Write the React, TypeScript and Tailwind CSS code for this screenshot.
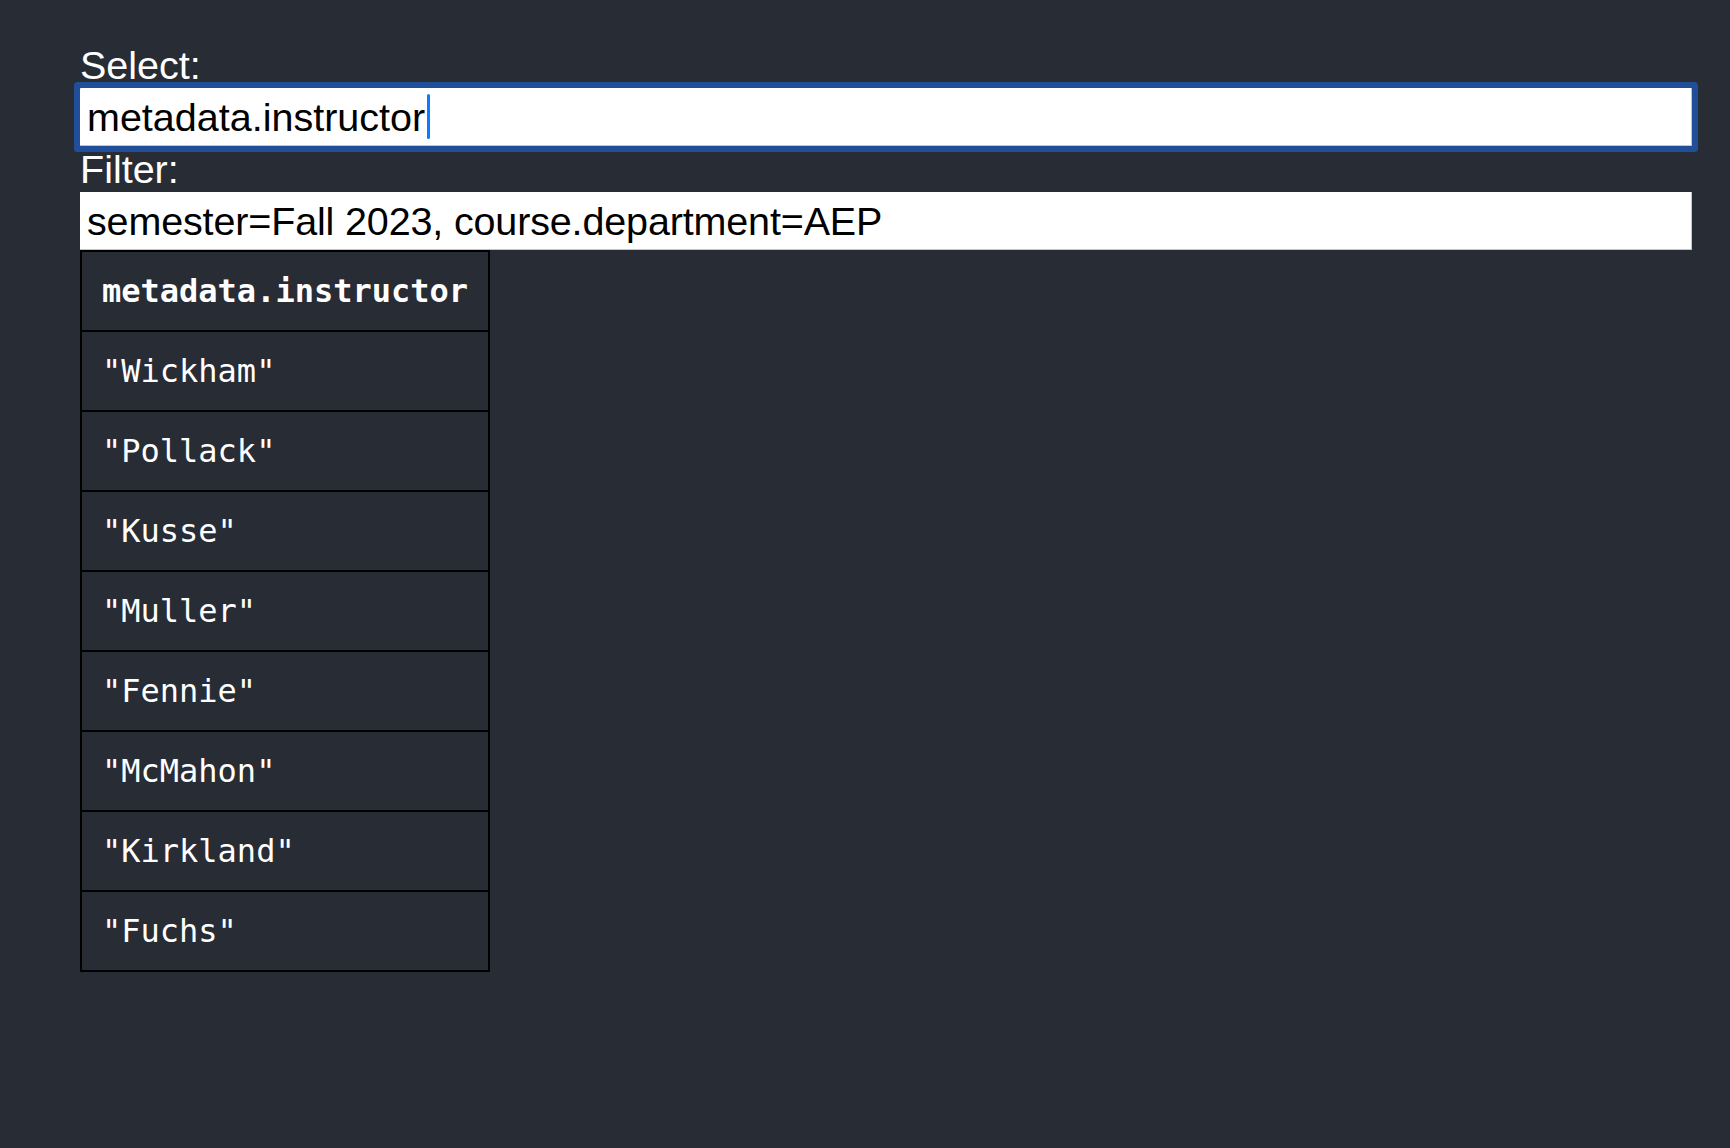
import React from "react";

const names = [
  "Wickham",
  "Pollack",
  "Kusse",
  "Muller",
  "Fennie",
  "McMahon",
  "Kirkland",
  "Fuchs",
];

export default function App() {
  return (
    <div className="min-h-[1148px] w-full bg-[#282c34] pl-[80px] pr-[38px] pt-[42px] font-['Liberation_Sans',Arial,sans-serif]">
      <label className="block h-[46px] text-[39.5px] leading-[46px] text-white">Select:</label>
      <div className="flex h-[58px] items-center rounded-[1px] border-b border-r border-[#c4c4c4] bg-white pl-[7px] text-[39.5px] leading-[46px] text-black shadow-[0_0_0_6px_#214e98]">
        <span>metadata.instructor</span>
        <span className="ml-[2px] inline-block h-[45px] w-[3px] rounded-full bg-[#0a7cff]" />
      </div>
      <label className="block h-[46px] text-[39.5px] leading-[46px] text-white">Filter:</label>
      <div className="flex h-[58px] items-center border-b border-r border-[#c4c4c4] bg-white pl-[7px] text-[39.5px] leading-[46px] tracking-[-0.15px] text-black">
        <span>semester=Fall 2023, course.department=AEP</span>
      </div>
      <div className="flex w-fit flex-col border-2 border-black font-['DejaVu_Sans_Mono',monospace] text-[32px] text-white">
        <div className="flex h-[78px] items-center px-[20px] font-bold">metadata.instructor</div>
        {names.map((n) => (
          <div key={n} className="flex h-[80px] items-center border-t-2 border-black px-[20px]">
            "{n}"
          </div>
        ))}
      </div>
    </div>
  );
}
